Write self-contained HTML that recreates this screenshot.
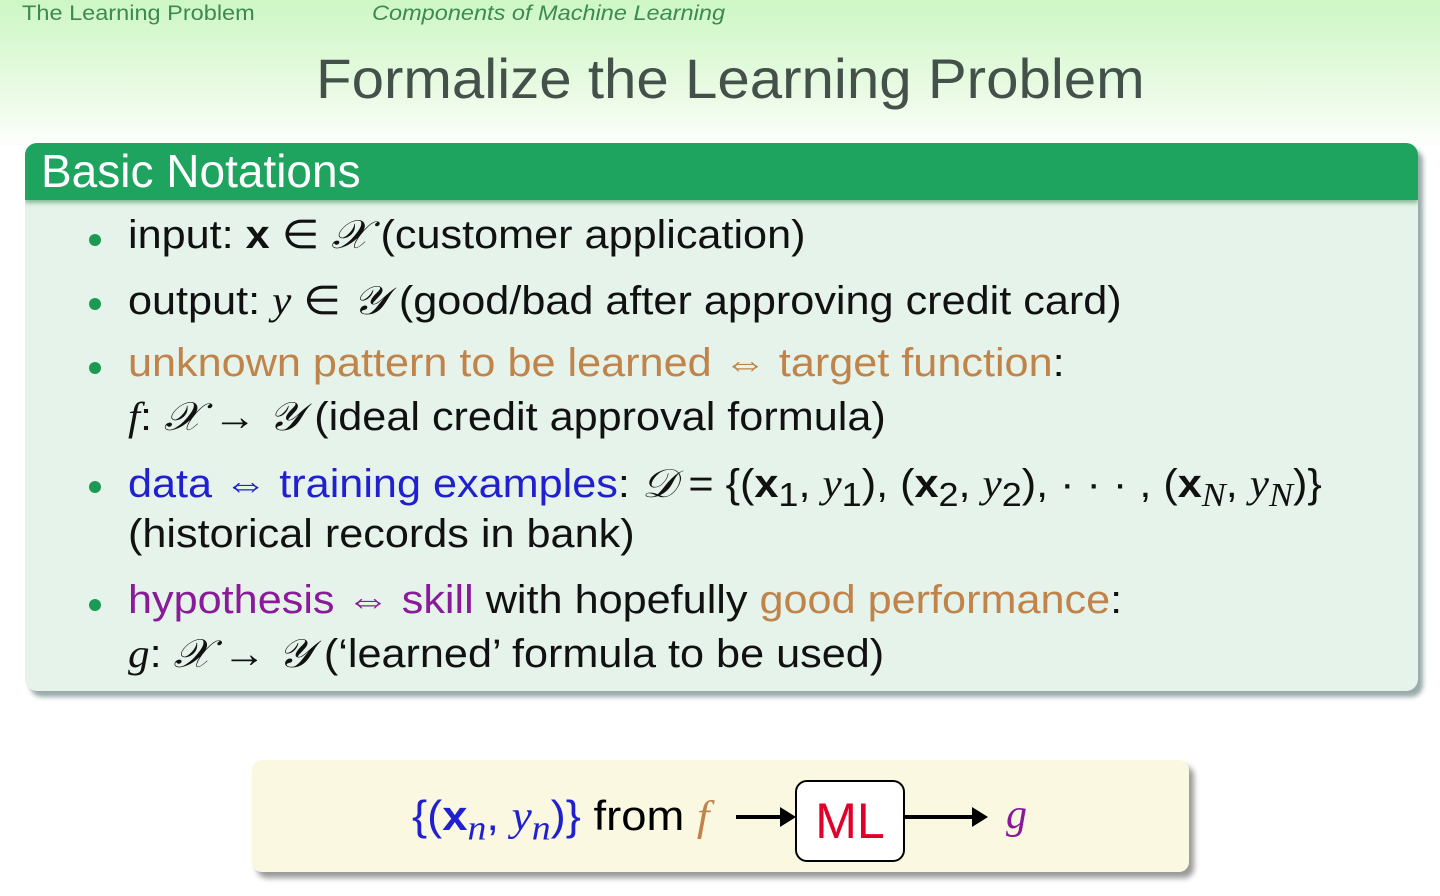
<!DOCTYPE html><html><head><style>
body{margin:0;width:1440px;height:896px;overflow:hidden;background:#fff;font-family:"Liberation Sans",sans-serif;position:relative}
.top{position:absolute;left:0;top:0;width:1440px;height:150px;background:linear-gradient(#cdf7c4,#eefbe9 70%,#fff)}
.nav{position:absolute;top:2px;font-size:21px;color:#3d8a4e;transform:scaleX(1.12);transform-origin:left}
h1{position:absolute;left:316px;top:46px;margin:0;font-weight:normal;font-size:56px;color:#44504a;white-space:nowrap;transform:scaleX(1.04);transform-origin:left}
.box{position:absolute;left:25px;top:143px;width:1393px;height:548px;background:#e5f3ea;border-radius:12px;box-shadow:5px 6px 5px #9aa;overflow:hidden}
.hd{height:57px;background:#1fa460;color:#fff;font-size:46px;padding-left:16px;line-height:57px;box-shadow:0 3px 4px #8b9}
.l{position:absolute;left:103px;font-size:40px;color:#111;white-space:nowrap;transform:scaleX(1.08);transform-origin:left}
.b{position:absolute;left:64px;width:12px;height:12px;border-radius:50%;background:#1b9a55}
.o{color:#c0834a}.bl{color:#2020d0}.p{color:#8a1a9a}
i{font-family:"Liberation Serif",serif}
.bot{position:absolute;left:252px;top:760px;width:937px;height:112px;background:#faf8e1;border-radius:10px;box-shadow:5px 6px 6px #999}
</style></head><body>
<div class="top"></div>
<div class="nav" style="left:22px">The Learning Problem</div>
<div class="nav" style="left:372px;font-style:italic">Components of Machine Learning</div>
<h1>Formalize the Learning Problem</h1>
<div class="box"><div class="hd">Basic Notations</div>
<div class="b" style="top:91px"></div><div class="l" style="top:68px">input: <b>x</b> ∈ <i>𝒳</i> (customer application)</div>
<div class="b" style="top:155px"></div><div class="l" style="top:134px">output: <i>y</i> ∈ <i>𝒴</i> (good/bad after approving credit card)</div>
<div class="b" style="top:219px"></div><div class="l" style="top:198px"><span class="o">unknown pattern to be learned ⇔ target function</span>:</div>
<div class="l" style="top:250px"><i>f</i>: <i>𝒳</i> → <i>𝒴</i> (ideal credit approval formula)</div>
<div class="b" style="top:338px"></div><div class="l" style="top:317px"><span class="bl">data ⇔ training examples</span>: <i>𝒟</i> = {(<b>x</b><sub>1</sub>, <i>y</i><sub>1</sub>), (<b>x</b><sub>2</sub>, <i>y</i><sub>2</sub>), · · · , (<b>x</b><sub><i>N</i></sub>, <i>y<sub>N</sub></i>)}</div>
<div class="l" style="top:369px">(historical records in bank)</div>
<div class="b" style="top:456px"></div><div class="l" style="top:435px"><span class="p">hypothesis ⇔ skill</span> with hopefully <span class="o">good performance</span>:</div>
<div class="l" style="top:487px"><i>g</i>: <i>𝒳</i> → <i>𝒴</i> (‘learned’ formula to be used)</div>
</div>
<div class="bot">
<div style="position:absolute;left:160px;top:32px;font-size:42px;white-space:nowrap;transform:scaleX(1.08);transform-origin:left"><span class="bl">{(<b>x</b><i><sub>n</sub></i>, <i>y<sub>n</sub></i>)}</span> from <i class="o">f</i></div>
<div style="position:absolute;left:484px;top:55px;width:50px;height:4px;background:#000"></div>
<div style="position:absolute;left:528px;top:47px;border-left:16px solid #000;border-top:10px solid transparent;border-bottom:10px solid transparent"></div>
<div style="position:absolute;left:543px;top:20px;width:106px;height:78px;border:2px solid #000;border-radius:12px;background:#fff;color:#e0002a;font-size:50px;text-align:center;line-height:78px">ML</div>
<div style="position:absolute;left:651px;top:55px;width:70px;height:4px;background:#000"></div>
<div style="position:absolute;left:720px;top:47px;border-left:16px solid #000;border-top:10px solid transparent;border-bottom:10px solid transparent"></div>
<div style="position:absolute;left:754px;top:30px;font-size:42px" class="p"><i>g</i></div>
</div>
</body></html>
